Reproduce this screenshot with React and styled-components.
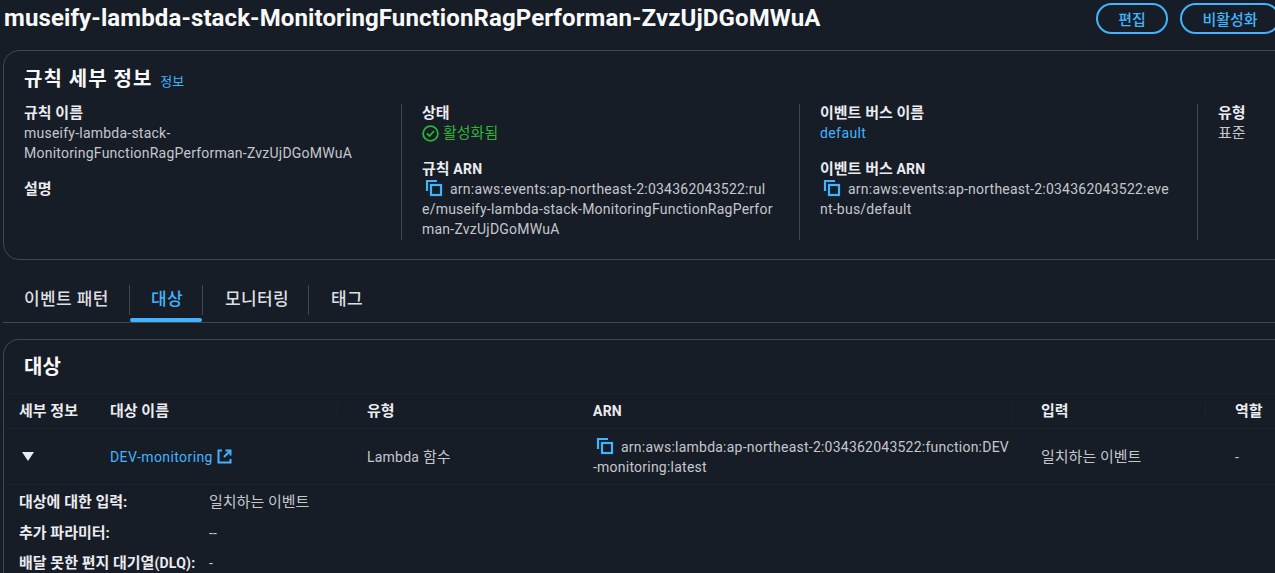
import styled, { createGlobalStyle } from "styled-components";

const GlobalStyle = createGlobalStyle`
  html, body {
    margin: 0;
    height: 573px;
    overflow: hidden;
    background: #161d26;
  }
  body {
    color: #c6c6cd;
    font-family: "Roboto", "Noto Sans CJK KR", sans-serif;
    font-size: 14px;
    line-height: 20px;
    letter-spacing: 0.23px;
  }
`;

const Page = styled.div`
  width: 1300px;
  height: 573px;
  overflow: hidden;
  padding: 0 0 0 3px;
  box-sizing: border-box;
`;

const Ko = styled.span`
  font-size: 15px;
  letter-spacing: 0;
`;

const TitleBar = styled.header`
  display: flex;
  align-items: center;
  height: 36px;
  margin-bottom: 14px;
`;

const Title = styled.h1`
  margin: 0 0 0 1px;
  width: 1092px;
  font-size: 24px;
  line-height: 36px;
  font-weight: 700;
  letter-spacing: 0.11px;
  color: #f9f9fa;
  white-space: nowrap;
`;

const Pill = styled.button`
  box-sizing: border-box;
  flex: none;
  height: 31px;
  width: ${(p) => p.$width}px;
  margin-right: 12px;
  border: 2px solid #42b4ff;
  border-radius: 16px;
  background: transparent;
  color: #42b4ff;
  font: 500 15px "Noto Sans CJK KR", sans-serif;
  padding: 0;
`;

const Panel = styled.section`
  box-sizing: border-box;
  border: 1px solid #424650;
  border-radius: 16px;
  background: #161d26;
`;

const DetailPanel = styled(Panel)`
  height: 210px;
  padding: 15px 20px 0;
`;

const PanelHeading = styled.h2`
  margin: 0;
  display: flex;
  align-items: baseline;
  gap: 8px;
  font-size: 20px;
  line-height: 26px;
  font-weight: 700;
  letter-spacing: 1px;
  color: #f9f9fa;
`;

const InfoLink = styled.a`
  font-size: 13px;
  font-weight: 400;
  letter-spacing: 0;
  color: #42b4ff;
`;

const Columns = styled.div`
  display: grid;
  grid-template-columns: 377px 398px 398px 80px;
  margin-top: 9px;
  height: 136px;
`;

const Column = styled.div`
  box-sizing: border-box;
  padding-left: ${(p) => (p.$first ? 0 : 20)}px;
  padding-right: 20px;
  border-left: ${(p) => (p.$first ? "none" : "1px solid #424650")};
  display: flex;
  flex-direction: column;
  gap: 16px;
  > div:first-child {
    margin-top: -1px;
  }
`;

const Label = styled.div`
  font-weight: 700;
  color: #ebebf0;
`;

const BlueText = styled.a`
  color: #42b4ff;
  letter-spacing: 0.4px;
`;

const StatusText = styled.div`
  display: flex;
  align-items: center;
  gap: 4px;
  color: #2bb534;
`;

const ArnText = styled.div`
  white-space: nowrap;
`;

const CopySvg = styled.svg`
  width: 18px;
  height: 18px;
  margin: 0 7px 0 3px;
  vertical-align: -3px;
  fill: none;
  stroke: #42b4ff;
  stroke-width: 2.2;
`;

const TabBar = styled.nav`
  display: flex;
  height: 37px;
  margin-top: 25px;
  border-bottom: 1px solid #424650;
`;

const Tab = styled.div`
  position: relative;
  box-sizing: border-box;
  width: ${(p) => p.$width}px;
  height: 30px;
  padding-left: ${(p) => p.$pad}px;
  font-size: 17px;
  line-height: 28px;
  font-weight: 500;
  letter-spacing: 0.4px;
  color: ${(p) => (p.$active ? "#42b4ff" : "#dedee3")};
  border-right: ${(p) => (p.$last ? "none" : "1px solid #424650")};
  &::after {
    content: "";
    display: ${(p) => (p.$active ? "block" : "none")};
    position: absolute;
    left: 0;
    right: 0;
    top: 33px;
    height: 4px;
    border-radius: 2px;
    background: #42b4ff;
  }
`;

const TargetPanel = styled(Panel)`
  margin-top: 16px;
  height: 300px;
  border-bottom: none;
`;

const TargetHeading = styled(PanelHeading)`
  padding: 14px 20px 13px;
  letter-spacing: 0;
`;

const Table = styled.div`
  display: grid;
  grid-template-columns: 91px 257px 226px 448px 194px 80px;
  margin-left: 15px;
`;

const HeadCell = styled.div`
  position: relative;
  height: 36px;
  display: flex;
  align-items: center;
  font-weight: 700;
  color: #ebebf0;
  border-top: 1px solid #1b232e;
  border-bottom: 1px solid #1b232e;
  box-sizing: border-box;
  margin-left: -15px;
  padding-left: 15px;
  &::before {
    content: "";
    display: ${(p) => (p.$divider ? "block" : "none")};
    position: absolute;
    left: -15px;
    top: 8px;
    bottom: 8px;
    width: 1px;
    background: #1b232e;
  }
`;

const BodyCell = styled.div`
  height: 56px;
  display: flex;
  align-items: center;
  border-bottom: 1px solid #1b232e;
  box-sizing: border-box;
  margin-left: -15px;
  padding-left: 15px;
`;

const Caret = styled.span`
  width: 0;
  height: 0;
  margin-left: 3px;
  border-left: 6px solid transparent;
  border-right: 6px solid transparent;
  border-top: 9px solid #ebebf0;
`;

const LinkText = styled.a`
  color: #42b4ff;
  letter-spacing: 0.4px;
  display: inline-flex;
  align-items: center;
  gap: 4px;
`;

const DetailList = styled.dl`
  margin: 2px 0 0 15px;
  display: grid;
  grid-template-columns: 190px 1fr;
  grid-auto-rows: 30.5px;
  align-items: center;
`;

const DetailKey = styled.dt`
  font-weight: 700;
  color: #ebebf0;
  white-space: nowrap;
`;

const DetailValue = styled.dd`
  margin: 0;
`;

const CopyIcon = () => (
  <CopySvg viewBox="0 0 18 18">
    <path d="M2 12V2h10" />
    <rect x="6" y="6" width="10" height="10" />
  </CopySvg>
);

const StatusIcon = () => (
  <svg width="17" height="17" viewBox="0 0 17 17" fill="none" stroke="#2bb534" strokeWidth="1.8">
    <circle cx="8.5" cy="8.5" r="7.4" />
    <path d="M5 8.5l2.5 2.5 4.5-5" />
  </svg>
);

const ExternalIcon = () => (
  <svg width="15" height="15" viewBox="0 0 15 15" fill="none" stroke="#42b4ff" strokeWidth="2">
    <path d="M5 1.5H1.5v12h12V10" />
    <path d="M8.5 1.5h5v5M13.5 1.5L7 8" />
  </svg>
);

export default function App() {
  return (
    <Page>
      <GlobalStyle />
      <TitleBar>
        <Title>museify-lambda-stack-MonitoringFunctionRagPerforman-ZvzUjDGoMWuA</Title>
        <Pill $width={72}>편집</Pill>
        <Pill $width={100}>비활성화</Pill>
      </TitleBar>

      <DetailPanel>
        <PanelHeading>
          규칙 세부 정보 <InfoLink>정보</InfoLink>
        </PanelHeading>
        <Columns>
          <Column $first>
            <div>
              <Label><Ko>규칙 이름</Ko></Label>
              museify-lambda-stack-
              <br />
              MonitoringFunctionRagPerforman-ZvzUjDGoMWuA
            </div>
            <div>
              <Label><Ko>설명</Ko></Label>
            </div>
          </Column>
          <Column>
            <div>
              <Label><Ko>상태</Ko></Label>
              <StatusText>
                <StatusIcon />
                <Ko>활성화됨</Ko>
              </StatusText>
            </div>
            <div>
              <Label><Ko>규칙</Ko> ARN</Label>
              <ArnText>
                <CopyIcon />
                arn:aws:events:ap-northeast-2:034362043522:rul
                <br />
                e/museify-lambda-stack-MonitoringFunctionRagPerfor
                <br />
                man-ZvzUjDGoMWuA
              </ArnText>
            </div>
          </Column>
          <Column>
            <div>
              <Label><Ko>이벤트 버스 이름</Ko></Label>
              <BlueText>default</BlueText>
            </div>
            <div>
              <Label><Ko>이벤트 버스</Ko> ARN</Label>
              <ArnText>
                <CopyIcon />
                arn:aws:events:ap-northeast-2:034362043522:eve
                <br />
                nt-bus/default
              </ArnText>
            </div>
          </Column>
          <Column>
            <div>
              <Label><Ko>유형</Ko></Label>
              <Ko>표준</Ko>
            </div>
          </Column>
        </Columns>
      </DetailPanel>

      <TabBar>
        <Tab $width={127} $pad={21}>이벤트 패턴</Tab>
        <Tab $width={73} $pad={21} $active>대상</Tab>
        <Tab $width={106} $pad={22}>모니터링</Tab>
        <Tab $width={80} $pad={22} $last>태그</Tab>
      </TabBar>

      <TargetPanel>
        <TargetHeading>대상</TargetHeading>
        <Table>
          <HeadCell><Ko>세부 정보</Ko></HeadCell>
          <HeadCell><Ko>대상 이름</Ko></HeadCell>
          <HeadCell $divider><Ko>유형</Ko></HeadCell>
          <HeadCell>ARN</HeadCell>
          <HeadCell $divider><Ko>입력</Ko></HeadCell>
          <HeadCell $divider><Ko>역할</Ko></HeadCell>

          <BodyCell><Caret /></BodyCell>
          <BodyCell>
            <LinkText>DEV-monitoring <ExternalIcon /></LinkText>
          </BodyCell>
          <BodyCell><span>Lambda <Ko>함수</Ko></span></BodyCell>
          <BodyCell>
            <ArnText>
              <CopyIcon />
              arn:aws:lambda:ap-northeast-2:034362043522:function:DEV
              <br />
              -monitoring:latest
            </ArnText>
          </BodyCell>
          <BodyCell><Ko>일치하는 이벤트</Ko></BodyCell>
          <BodyCell>-</BodyCell>
        </Table>
        <DetailList>
          <DetailKey><Ko>대상에 대한 입력:</Ko></DetailKey>
          <DetailValue><Ko>일치하는 이벤트</Ko></DetailValue>
          <DetailKey><Ko>추가 파라미터:</Ko></DetailKey>
          <DetailValue>--</DetailValue>
          <DetailKey><Ko>배달 못한 편지 대기열</Ko>(DLQ):</DetailKey>
          <DetailValue>-</DetailValue>
        </DetailList>
      </TargetPanel>
    </Page>
  );
}
